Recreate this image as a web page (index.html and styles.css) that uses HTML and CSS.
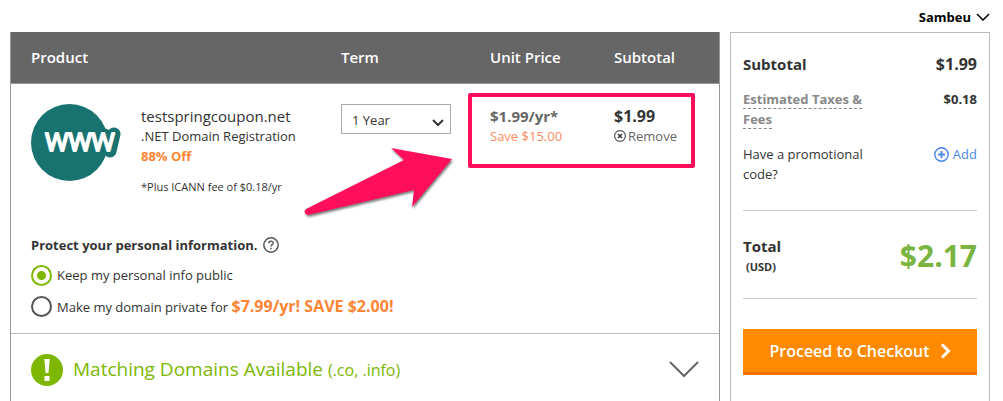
FILE: index.html
```
<!DOCTYPE html>
<html lang="en">
<head>
<meta charset="utf-8">
<title>Shopping Cart</title>
<link rel="stylesheet" href="styles.css">
</head>
<body>
<div class="page">
  <header class="topbar">
    <button class="user" type="button">Sambeu
      <svg width="14" height="8" viewBox="0 0 14 8"><path d="M1 1l6 6 6-6" fill="none" stroke="#000" stroke-width="1.5"/></svg>
    </button>
  </header>
  <div class="layout">
    <main class="cart">
      <table class="items">
        <colgroup><col class="col-product"><col class="col-term"><col class="col-price"><col class="col-sub"></colgroup>
        <thead>
          <tr><th scope="col">Product</th><th scope="col">Term</th><th scope="col">Unit Price</th><th scope="col">Subtotal</th></tr>
        </thead>
        <tbody>
          <tr>
            <td>
              <div class="product">
                <svg class="logo" width="90" height="77" viewBox="0 0 90 77">
                  <circle cx="38.500" cy="38.500" r="38.500" fill="#177270"/>
                  <path d="M79 47L83 30" stroke="#177270" stroke-width="13" stroke-linecap="round"/>
                  <path d="M73 24L78 26L82 24V30H74Z" fill="#177270"/>
                  <text class="logo-text" x="49" y="47" text-anchor="middle">WWW</text>
                </svg>
                <div class="details">
                  <div class="name">testspringcoupon.net</div>
                  <div class="desc">.NET Domain Registration</div>
                  <div class="off">88% Off</div>
                  <div class="fee">*Plus ICANN fee of $0.18/yr</div>
                </div>
              </div>
            </td>
            <td><select class="term" aria-label="Term"><option>1 Year</option></select></td>
            <td><div class="price">
              <div class="unit">$1.99/yr*</div>
              <div class="save">Save $15.00</div>
            </div></td>
            <td><div class="price">
              <div class="amount">$1.99</div>
              <button class="remove" type="button">
                <svg width="12" height="12" viewBox="0 0 12 12" fill="none" stroke="#555"><circle cx="6" cy="6" r="5.400" stroke-width="1.200"/><path d="M4 4l4 4M8 4l-4 4" stroke="#333" stroke-width="1.500"/></svg>
                Remove</button>
            </div></td>
          </tr>
        </tbody>
      </table>
      <fieldset class="privacy">
        <legend>Protect your personal information.
          <svg width="16" height="16" viewBox="0 0 16 16" fill="none" stroke="#555"><circle cx="8" cy="8" r="7.200" stroke-width="1.500"/><path d="M5.800 6.300C5.800 3.500 10.300 3.600 10.200 6.200C10.100 7.700 8 7.700 8 9.500" stroke-width="1.400"/><path d="M8 10.700V12.200" stroke-width="1.500"/></svg>
        </legend>
        <label class="choice"><input type="radio" name="privacy" checked><span>Keep my personal info public</span></label>
        <label class="choice"><input type="radio" name="privacy"><span>Make my domain private for <strong>$7.99/yr! SAVE $2.00!</strong></span></label>
      </fieldset>
      <button class="matching" type="button">
        <svg width="32" height="32" viewBox="0 0 32 32"><circle cx="16" cy="16" r="16" fill="#7db701"/><path d="M13.300 5h5.400l-1.200 14h-3zM13.500 22h5v5h-5z" fill="#fff"/></svg>
        <span class="matching-title">Matching Domains Available <span class="tlds">(.co, .info)</span></span>
        <svg width="30" height="17" viewBox="0 0 30 17"><path d="M1 1l14 14L29 1" fill="none" stroke="#666" stroke-width="2"/></svg>
      </button>
      <div class="highlight"></div>
      <svg class="arrow" width="160" height="76" viewBox="0 0 160 76"><path d="M152 15L91 4L104 16L6 65Q3 68 6 70L8 71L114 46L112 63Z" fill="#ff0f5b"/></svg>
    </main>
    <aside class="summary">
      <div class="line subtotal"><span>Subtotal</span><span class="sum">$1.99</span></div>
      <div class="line taxes"><a href="#" class="label"><span class="dashed">Estimated Taxes &amp; Fees</span></a><span>$0.18</span></div>
      <div class="line promo"><span class="label">Have a promotional code?</span>
        <a class="add" href="#"><svg width="15" height="15" viewBox="0 0 15 15" fill="none" stroke="#4a86e8"><circle cx="7.500" cy="7.500" r="6.700" stroke-width="1.400"/><path d="M7.500 4v7M4 7.500h7" stroke-width="1.800"/></svg>Add</a>
      </div>
      <div class="total">
        <div><div class="total-label">Total</div><div class="currency">(USD)</div></div>
        <div class="total-amount">$2.17</div>
      </div>
      <button class="checkout" type="button">Proceed to Checkout
        <svg width="11" height="16" viewBox="0 0 11 16"><path d="M2 1.500L8.500 8L2 14.500" fill="none" stroke="#fff" stroke-width="3"/></svg>
      </button>
    </aside>
  </div>
</div>
</body>
</html>
```

FILE: styles.css
```
* { box-sizing: border-box; }
body {
  margin: 0;
  background: #fff;
  color: #333;
  font: 13px/20px "Open Sans", "Noto Sans", sans-serif;
}
button {
  font: inherit;
  color: inherit;
  background: none;
  border: 0;
  padding: 0;
  cursor: pointer;
}
svg { flex: none; }
a { color: inherit; text-decoration: none; }

.page {
  display: flex;
  flex-direction: column;
  min-height: 100vh;
  padding: 0 13px 0 10px;
}
.topbar {
  display: flex;
  justify-content: flex-end;
  height: 32px;
  padding-top: 2px;
}
.user {
  display: flex;
  align-items: center;
  gap: 5px;
  color: #000;
  font-weight: 700;
}
.layout {
  flex: 1;
  display: grid;
  grid-template-columns: minmax(0, 1fr) 260px;
  gap: 10px;
}

.cart {
  position: relative;
  border: solid #999;
  border-width: 0 1px;
}
.items {
  width: 100%;
  table-layout: fixed;
  border-collapse: collapse;
}
.col-product { width: 330px; }
.col-term { width: 149px; }
.col-price { width: 124px; }
.items th {
  height: 51px;
  padding: 0 0 0 20px;
  background: #666;
  border-bottom: 1px solid #999;
  color: #fff;
  font-size: 15px;
  font-weight: 600;
  text-align: left;
}
.items th:not(:first-child), .items td:not(:first-child) { padding-left: 0; }
.items td {
  padding: 20px 0 0 20px;
  vertical-align: top;
}
.product { display: flex; gap: 20px; }
.logo-text {
  font: 400 25px "Open Sans", sans-serif;
  fill: #fff;
  stroke: #fff;
  stroke-width: 2px;
  stroke-linejoin: round;
}
.details, .price { padding-top: 2px; white-space: nowrap; }
.name { font-size: 15px; }
.off { color: #ff8534; font-weight: 700; }
.fee { margin-top: 11px; font-size: 11px; }
.term {
  appearance: none;
  width: 110px;
  height: 30px;
  padding: 2px 10px 0;
  border: 1px solid #aaa;
  border-radius: 0;
  background: #fff url("data:image/svg+xml,%3Csvg xmlns='http://www.w3.org/2000/svg' width='12' height='8'%3E%3Cpath d='M1 1l5 5 5-5' fill='none' stroke='%23333' stroke-width='2'/%3E%3C/svg%3E") no-repeat right 6px top 14px;
  color: #333;
  font: inherit;
}
.unit, .amount { font-size: 15px; font-weight: 700; }
.unit { color: #666; }
.save { color: #ff8a5c; }
.remove {
  display: flex;
  align-items: center;
  gap: 2px;
  color: #666;
}

.privacy {
  margin: 0;
  padding: 5px 20px 11px;
  border: 0;
  border-bottom: 1px solid #bbb;
}
.privacy legend {
  display: flex;
  align-items: center;
  gap: 5px;
  padding: 38px 0 0;
  font-weight: 700;
}
.choice {
  display: flex;
  align-items: center;
  gap: 5px;
  height: 31px;
}
.choice input {
  appearance: none;
  width: 21px;
  height: 21px;
  margin: 0;
  border: 2px solid #555;
  border-radius: 50%;
}
.choice input:checked {
  border-color: #7db701;
  background: radial-gradient(circle, #7db701 4px, #fff 5px);
}
.choice strong { color: #ff8534; font-size: 16px; }
.matching {
  display: flex;
  align-items: center;
  gap: 10px;
  width: 100%;
  padding: 20px 20px;
  color: #7db701;
  text-align: left;
}
.matching-title { flex: 1; font-size: 19px; }
.tlds { font-size: 16px; }

.highlight {
  position: absolute;
  top: 61px;
  left: 457px;
  width: 227px;
  height: 75px;
  border: 4px solid #ff0f5b;
  border-radius: 2px;
}
.arrow {
  position: absolute;
  top: 112px;
  left: 289px;
  filter: drop-shadow(1px 2px 1px rgba(0, 0, 0, .5));
}

.summary {
  padding: 21px 12px 0;
  border: 1px solid #bbb;
  border-bottom: 0;
}
.line { display: flex; justify-content: space-between; }
.line .label { width: 130px; }
.subtotal { font-size: 15px; font-weight: 700; }
.amount, .sum { font-size: 16px; }
.taxes { margin-top: 15px; font-weight: 700; }
.taxes .label { color: #888; }
.dashed { border-bottom: 1px dashed #888; }
.promo { margin-top: 15px; }
.add {
  display: flex;
  align-items: center;
  gap: 4px;
  height: 20px;
  color: #4a86e8;
}
.total {
  display: flex;
  justify-content: space-between;
  align-items: center;
  margin: 26px 0 30px;
  padding: 24px 0 21px;
  border: solid #ccc;
  border-width: 1px 0;
  font-weight: 700;
}
.total-label { font-size: 15px; line-height: 22px; }
.currency { padding-left: 3px; font-size: 11px; font-weight: 700; }
.total-amount { color: #7ab441; font-size: 30px; line-height: 40px; }
.checkout {
  display: flex;
  align-items: center;
  justify-content: center;
  gap: 10px;
  width: 100%;
  height: 46px;
  border-bottom: 3px solid #ff6f00;
  background: #ff8a00;
  color: #fff;
  font-size: 16px;
  font-weight: 600;
}
```
